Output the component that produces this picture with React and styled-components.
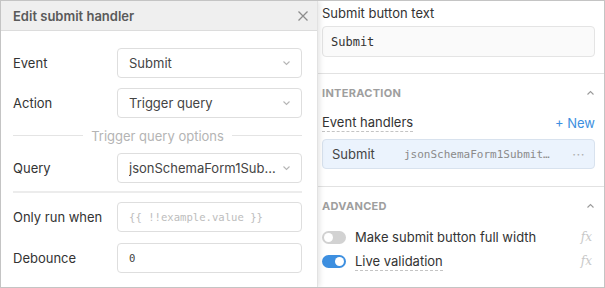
import React from 'react'
import styled, { createGlobalStyle } from 'styled-components'

const Global = createGlobalStyle`
  html, body { margin: 0; padding: 0; background: #fff; }
  body { font-family: Inter, "Noto Sans", sans-serif; -webkit-font-smoothing: antialiased; }
`

const Frame = styled.div`
  width: 605px;
  height: 288px;
  box-sizing: border-box;
  border: 1px solid #c4c4c4;
  display: flex;
  overflow: hidden;
  background: #fff;
`

const Modal = styled.div`
  width: 316px;
  flex-shrink: 0;
  background: #fff;
  box-shadow: 2px 0 5px rgba(0,0,0,0.10);
  border-right: 1px solid #e2e2e2;
  position: relative;
  z-index: 2;
  display: flex;
  flex-direction: column;
`

const Header = styled.div`
  height: 29px;
  background: #efefef;
  border-bottom: 1px solid #dcdcdc;
  display: flex;
  align-items: center;
  justify-content: space-between;
  padding: 0 8px 0 12px;
`

const Title = styled.div`
  font-size: 13px;
  font-weight: 600;
  color: #5a5a5a;
`

const Body = styled.div`
  padding: 17px 15px 0 12px;
  display: flex;
  flex-direction: column;
`

const Row = styled.div`
  display: grid;
  grid-template-columns: 104px 1fr;
  align-items: center;
  margin-top: ${p => p.$gap || 0}px;
`

const Label = styled.div`
  font-size: 13px;
  color: #333;
`

const Box = styled.div`
  height: 30px;
  box-sizing: border-box;
  border: 1px solid #dedede;
  border-radius: 4px;
  display: flex;
  align-items: center;
  padding: 0 10px 0 11px;
  font-size: 13px;
  color: #444;
  background: #fff;
`

const BoxText = styled.span`
  flex: 1;
  white-space: nowrap;
  overflow: hidden;
  font-family: ${p => p.$mono ? '"DejaVu Sans Mono", monospace' : 'inherit'};
  font-size: ${p => p.$mono ? '10.6px' : '13px'};
  color: ${p => p.$muted ? '#bdbdbd' : '#444'};
`

const Divider = styled.div`
  display: flex;
  align-items: center;
  gap: 8px;
  height: 35px;
  font-size: 13px;
  color: #b4b4b4;
  &::before, &::after {
    content: '';
    flex: 1;
    height: 1px;
    background: #e4e4e4;
  }
`

const Rule = styled.div`
  height: 2px;
  background: #ececec;
  margin-top: 8px;
`

const Side = styled.div`
  flex: 1;
  padding: 4px 9px 0 4px;
  display: flex;
  flex-direction: column;
`

const FieldTitle = styled.div`
  font-size: 13px;
  color: #333;
  line-height: 17px;
`

const TextInput = styled.div`
  margin-top: 4px;
  height: 31px;
  box-sizing: border-box;
  border: 1px solid #e4e4e4;
  border-radius: 4px;
  background: #fafafa;
  display: flex;
  align-items: center;
  padding: 0 8px;
  font-family: "DejaVu Sans Mono", monospace;
  font-size: 12px;
  color: #333;
`

const SideRule = styled.div`
  height: 1px;
  background: #e2e2e2;
  margin: ${p => p.$top}px -9px 0 -4px;
`

const SectionHead = styled.div`
  display: flex;
  justify-content: space-between;
  align-items: center;
  height: 38px;
  font-size: 11px;
  font-weight: 700;
  color: #9e9e9e;
  letter-spacing: 0.3px;
`

const Dashed = styled.span`
  border-bottom: 1px dashed #c4c4c4;
  padding-bottom: 1px;
`

const HandlersHead = styled.div`
  display: flex;
  justify-content: space-between;
  align-items: center;
  margin-top: 2px;
  font-size: 13px;
  color: #333;
`

const NewLink = styled.span`
  color: #3d8fe0;
  font-size: 13px;
`

const Handler = styled.div`
  margin-top: 7px;
  height: 30px;
  box-sizing: border-box;
  border: 1px solid #d8e2ee;
  border-radius: 4px;
  background: #ebf3fd;
  display: flex;
  align-items: center;
  padding: 0 9px;
  font-size: 13px;
  color: #444;
`

const HandlerName = styled.span`
  width: 72px;
`

const HandlerQuery = styled.span`
  flex: 1;
  font-family: "DejaVu Sans Mono", monospace;
  font-size: 11px;
  color: #8a8a8a;
  white-space: nowrap;
`

const Dots = styled.span`
  color: #b0b0b0;
  font-size: 13px;
  letter-spacing: 0.5px;
`

const ToggleRow = styled.div`
  display: flex;
  align-items: center;
  height: 24px;
  font-size: 13px;
  color: #333;
`

const Toggle = styled.span`
  width: 24px;
  height: 13px;
  border-radius: 7px;
  background: ${p => p.$on ? '#3d8fe0' : '#d2d2d2'};
  position: relative;
  margin-right: 9px;
  flex-shrink: 0;
  &::after {
    content: '';
    position: absolute;
    top: 2px;
    left: ${p => p.$on ? '13px' : '2px'};
    width: 9px;
    height: 9px;
    border-radius: 50%;
    background: #fff;
  }
`

const ToggleLabel = styled.span`
  flex: 1;
`

const Fx = styled.span`
  font-family: "DejaVu Serif", serif;
  font-style: italic;
  font-size: 12px;
  color: #c8c8c8;
  margin-right: 3px;
`

const Chevron = ({ up }) => (
  <svg width="9" height="6" viewBox="0 0 9 6" style={{ transform: up ? 'rotate(180deg)' : 'none' }}>
    <path d="M1.5 1.5 L4.5 4.5 L7.5 1.5" fill="none" stroke={up ? '#9a9a9a' : '#b5b5b5'} strokeWidth="1.1" />
  </svg>
)

const Close = () => (
  <svg width="12" height="12" viewBox="0 0 12 12">
    <path d="M1.5 1.5 L10.5 10.5 M10.5 1.5 L1.5 10.5" stroke="#8c8c8c" strokeWidth="1.3" />
  </svg>
)

const Select = ({ children }) => (
  <Box>
    <BoxText>{children}</BoxText>
    <Chevron />
  </Box>
)

export default function App() {
  return (
    <Frame>
      <Global />
      <Modal>
        <Header>
          <Title>Edit submit handler</Title>
          <Close />
        </Header>
        <Body>
          <Row>
            <Label>Event</Label>
            <Select>Submit</Select>
          </Row>
          <Row $gap={10}>
            <Label>Action</Label>
            <Select>Trigger query</Select>
          </Row>
          <Divider>Trigger query options</Divider>
          <Row>
            <Label>Query</Label>
            <Select>jsonSchemaForm1Sub...</Select>
          </Row>
          <Rule />
          <Row $gap={9}>
            <Label>Only run when</Label>
            <Box><BoxText $mono $muted>{'{{ !!example.value }}'}</BoxText></Box>
          </Row>
          <Row $gap={11}>
            <Label>Debounce</Label>
            <Box><BoxText $mono>0</BoxText></Box>
          </Row>
        </Body>
      </Modal>
      <Side>
        <FieldTitle>Submit button text</FieldTitle>
        <TextInput>Submit</TextInput>
        <SideRule $top={16} />
        <SectionHead>INTERACTION<Chevron up /></SectionHead>
        <HandlersHead>
          <Dashed>Event handlers</Dashed>
          <NewLink>+ New</NewLink>
        </HandlersHead>
        <Handler>
          <HandlerName>Submit</HandlerName>
          <HandlerQuery>jsonSchemaForm1Submit…</HandlerQuery>
          <Dots>···</Dots>
        </Handler>
        <SideRule $top={17} />
        <SectionHead>ADVANCED<Chevron up /></SectionHead>
        <ToggleRow>
          <Toggle />
          <ToggleLabel>Make submit button full width</ToggleLabel>
          <Fx>fx</Fx>
        </ToggleRow>
        <ToggleRow>
          <Toggle $on />
          <ToggleLabel><Dashed>Live validation</Dashed></ToggleLabel>
          <Fx>fx</Fx>
        </ToggleRow>
      </Side>
    </Frame>
  )
}
